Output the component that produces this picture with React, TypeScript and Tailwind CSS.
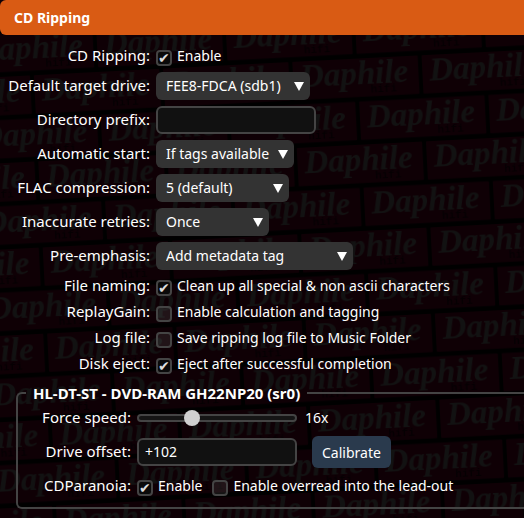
import { useId, useState } from "react";
import type { ReactNode } from "react";

const selects = [
  { label: "Default target drive:", options: ["FEE8-FDCA (sdb1)"], width: "w-[154px]" },
  { label: "Automatic start:", options: ["If tags available", "Always", "Never"], width: "w-[138px]" },
  { label: "FLAC compression:", options: ["5 (default)", "0 (fastest)", "8 (best)"], width: "w-[133px]" },
  { label: "Inaccurate retries:", options: ["Once", "Twice", "None"], width: "w-[113px]" },
  { label: "Pre-emphasis:", options: ["Add metadata tag", "Ignore"], width: "w-[197px]" },
];

const checks = [
  { label: "File naming:", text: "Clean up all special & non ascii characters", checked: true },
  { label: "ReplayGain:", text: "Enable calculation and tagging", checked: false },
  { label: "Log file:", text: "Save ripping log file to Music Folder", checked: false },
  { label: "Disk eject:", text: "Eject after successful completion", checked: true },
];

const field =
  "h-7 w-40 rounded-md border-2 border-[#444] bg-[#111] px-1.5 pb-0.5 text-white outline-none focus:border-[#777]";

function Brick({ x, y }: { x: number; y: number }) {
  return (
    <g transform={`translate(${x} ${y})`}>
      <rect width="125.5" height="38.5" rx="1" fill="#0f0005" />
      <text
        x="7"
        y="26"
        fontFamily="Liberation Serif, serif"
        fontSize="33"
        fontWeight="bold"
        fontStyle="italic"
        fill="#121212"
      >
        Daphile
      </text>
      <text
        x="77"
        y="35"
        fontFamily="Liberation Mono, monospace"
        fontSize="11"
        fontWeight="bold"
        fill="#050002"
      >
        hifi
      </text>
    </g>
  );
}

// Tilted brick wall behind the whole page
function Wall() {
  return (
    <svg className="absolute inset-0 -z-10 h-full w-full" aria-hidden="true">
      <defs>
        <pattern
          id="bricks"
          width="129.4"
          height="86.2"
          patternUnits="userSpaceOnUse"
          patternTransform="translate(296.7 148) rotate(-2.95)"
        >
          <Brick x={0} y={0} />
          <Brick x={64.7} y={43.1} />
          <Brick x={-64.7} y={43.1} />
        </pattern>
      </defs>
      <rect width="100%" height="100%" fill="#000" />
      <rect width="100%" height="100%" fill="url(#bricks)" />
    </svg>
  );
}

function Check({ id, text, checked }: { id?: string; text: string; checked: boolean }) {
  return (
    <label className="flex items-start gap-[5px] text-[14px] leading-5">
      <input
        id={id}
        type="checkbox"
        defaultChecked={checked}
        className="mt-1 flex size-4 shrink-0 appearance-none items-center justify-center rounded border-2 border-[#444] bg-white/8 text-[14px] leading-none text-[#ddd] checked:bg-[#0a0a0a] checked:before:content-['✔']"
      />
      {text}
    </label>
  );
}

function Select({ id, options, width }: { id: string; options: string[]; width: string }) {
  return (
    <div className={`relative ${width}`}>
      <select
        id={id}
        className="h-7 w-full appearance-none rounded-md bg-[#333] pr-4 pb-0.5 pl-2.5 text-[14px] text-white outline-none"
      >
        {options.map((o) => (
          <option key={o}>{o}</option>
        ))}
      </select>
      <svg
        viewBox="0 0 10 9"
        className="pointer-events-none absolute top-2.5 right-1.5 h-[9px] w-2.5 fill-white"
      >
        <path d="M0 0h10L5 9z" />
      </svg>
    </div>
  );
}

function Row({ id, label, height, children }: { id: string; label: string; height: string; children: ReactNode }) {
  return (
    <>
      <label htmlFor={id} className={`flex items-center justify-end pb-0.5 whitespace-nowrap ${height}`}>
        {label}
      </label>
      <div className={`flex items-center whitespace-nowrap ${height}`}>{children}</div>
    </>
  );
}

export default function App() {
  const uid = useId();
  const [speed, setSpeed] = useState(16);
  const [target, ...rest] = selects;

  return (
    <div className="relative isolate min-h-screen overflow-hidden font-['Noto_Sans',sans-serif] text-[15px] text-white">
      <Wall />
      <h1 className="flex h-[35px] items-center rounded-l-md bg-[#d95b14] px-3.5 text-[14px] font-bold">
        CD Ripping
      </h1>

      <form onSubmit={(e) => e.preventDefault()}>
        <div className="grid grid-cols-[150px_1fr] gap-x-1.5 pt-2">
          <Row id={`${uid}-rip`} label="CD Ripping:" height="h-[26px]">
            <Check id={`${uid}-rip`} text="Enable" checked />
          </Row>
          <Row id={`${uid}-target`} label={target.label} height="h-[34px]">
            <Select id={`${uid}-target`} options={target.options} width={target.width} />
          </Row>
          <Row id={`${uid}-prefix`} label="Directory prefix:" height="h-[34px]">
            <input id={`${uid}-prefix`} type="text" className={field} />
          </Row>
          {rest.map((s) => (
            <Row key={s.label} id={uid + s.label} label={s.label} height="h-[34px]">
              <Select id={uid + s.label} options={s.options} width={s.width} />
            </Row>
          ))}
          {checks.map((c) => (
            <Row key={c.label} id={uid + c.label} label={c.label} height="h-[26px]">
              <Check id={uid + c.label} text={c.text} checked={c.checked} />
            </Row>
          ))}
        </div>

        <fieldset className="mt-2 ml-4 rounded-l-md border-2 border-r-0 border-[#444] pb-1 pl-2">
          <legend className="px-[7px] leading-4 font-bold">HL-DT-ST - DVD-RAM GH22NP20 (sr0)</legend>
          <div className="grid grid-cols-[105px_1fr] gap-x-1.5">
            <Row id={`${uid}-speed`} label="Force speed:" height="h-[34px]">
              <input
                id={`${uid}-speed`}
                type="range"
                min={0}
                max={50}
                value={speed}
                onChange={(e) => setSpeed(Number(e.target.value))}
                className="h-2 w-40 appearance-none rounded-full border-2 border-[#444] bg-[#151515] [&::-webkit-slider-thumb]:size-4 [&::-webkit-slider-thumb]:appearance-none [&::-webkit-slider-thumb]:rounded-full [&::-webkit-slider-thumb]:bg-[#d0d0d0]"
              />
              <output className="ml-2 pb-0.5 text-[14px]">{speed}x</output>
            </Row>
            <Row id={`${uid}-offset`} label="Drive offset:" height="h-[34px]">
              <input id={`${uid}-offset`} type="text" defaultValue="+102" className={`text-[14px] ${field}`} />
              <button type="button" className="ml-[15px] h-8 rounded-md bg-[#2a3a4d] px-2.5 text-[14px]">
                Calibrate
              </button>
            </Row>
            <Row id={`${uid}-paranoia`} label="CDParanoia:" height="h-[34px]">
              <div className="flex gap-2.5">
                <Check id={`${uid}-paranoia`} text="Enable" checked />
                <Check text="Enable overread into the lead-out" checked={false} />
              </div>
            </Row>
          </div>
        </fieldset>
      </form>
    </div>
  );
}
